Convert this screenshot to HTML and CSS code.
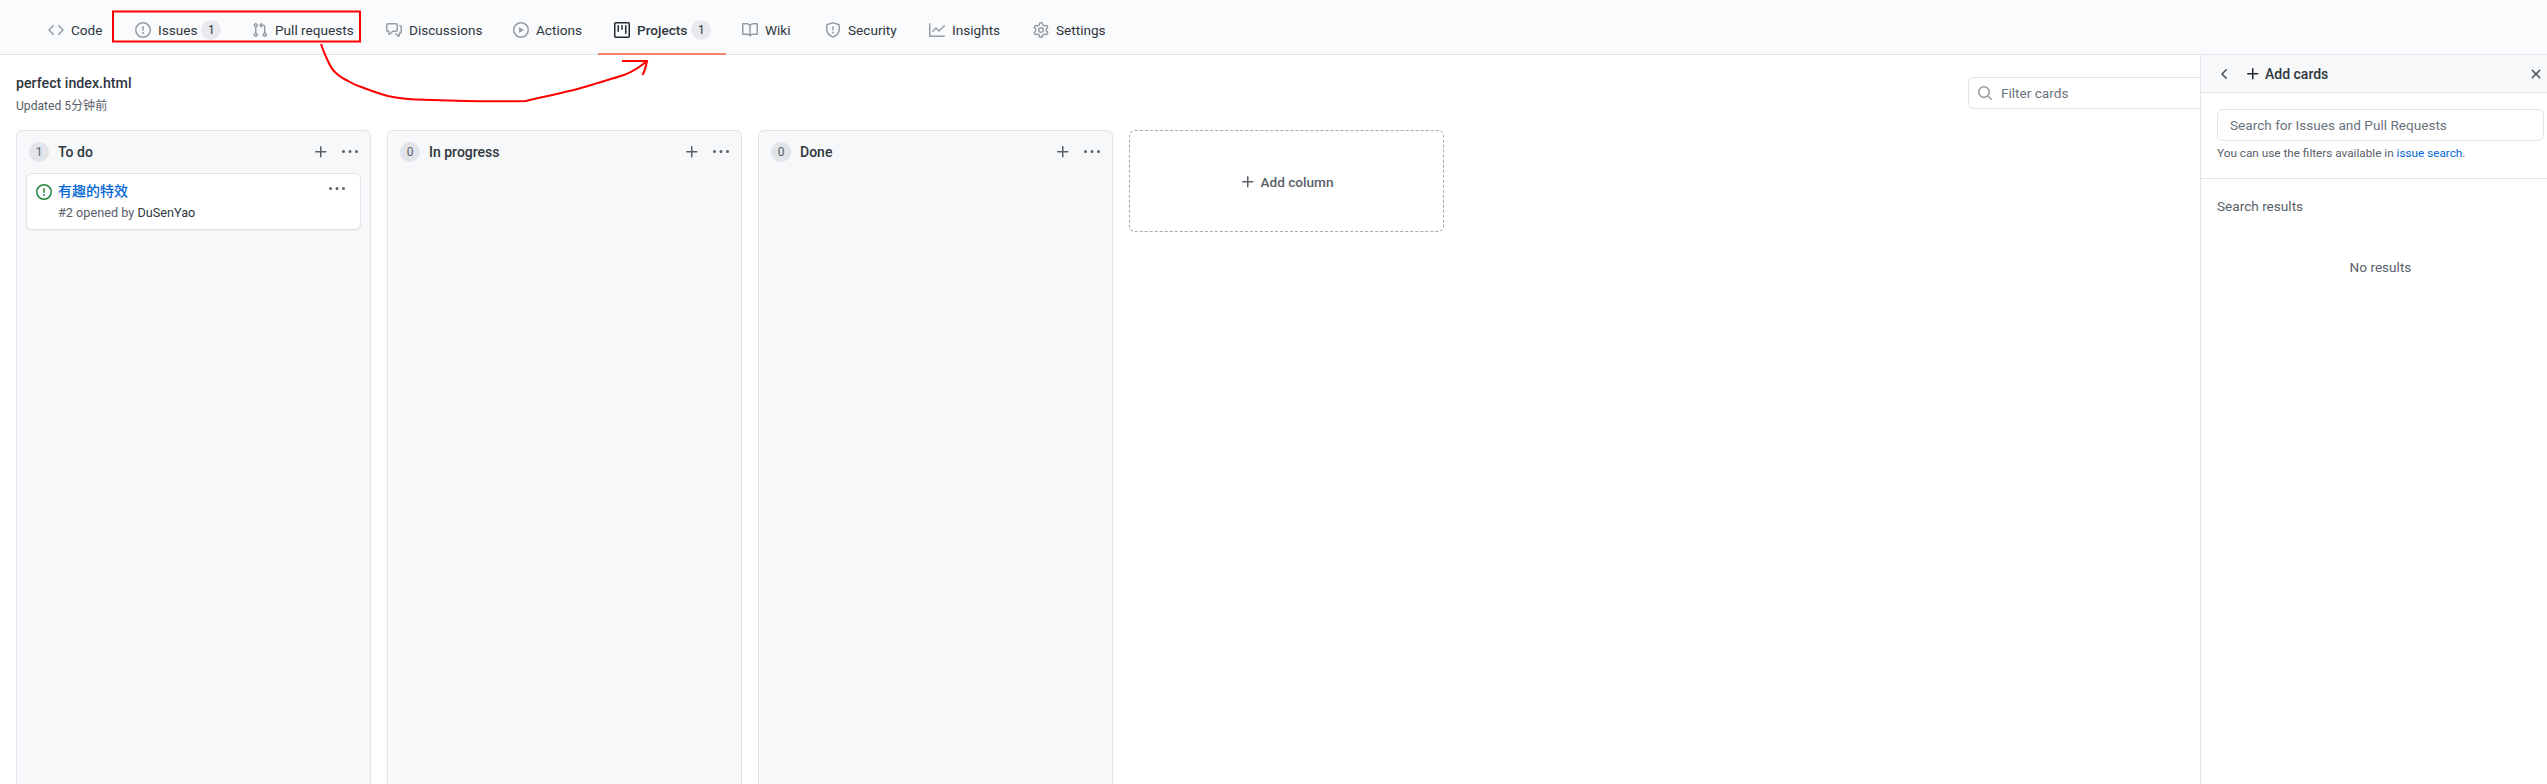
FILE: index.html
```html
<!DOCTYPE html>
<html lang="en">
<head>
<meta charset="utf-8">
<title>perfect index.html</title>
<link rel="stylesheet" href="styles.css">
</head>
<body>
<svg class="sprite" aria-hidden="true">
  <symbol id="i-code" viewBox="0 0 16 16"><path d="M4.72 3.22a.75.75 0 011.06 1.06L2.06 8l3.72 3.72a.75.75 0 11-1.06 1.06L.47 8.53a.75.75 0 010-1.06l4.25-4.25zm6.56 0a.75.75 0 10-1.06 1.06L13.94 8l-3.72 3.72a.75.75 0 101.06 1.06l4.25-4.25a.75.75 0 000-1.06l-4.25-4.25z"/></symbol>
  <symbol id="i-issue" viewBox="0 0 16 16"><path d="M8 1.5a6.5 6.5 0 100 13 6.5 6.5 0 000-13zM0 8a8 8 0 1116 0A8 8 0 010 8zm9 3a1 1 0 11-2 0 1 1 0 012 0zm-.25-6.25a.75.75 0 00-1.5 0v3.5a.75.75 0 001.5 0v-3.5z"/></symbol>
  <symbol id="i-pr" viewBox="0 0 16 16"><path d="M7.177 3.073L9.573.677A.25.25 0 0110 .854v4.792a.25.25 0 01-.427.177L7.177 3.427a.25.25 0 010-.354zM3.75 2.5a.75.75 0 100 1.5.75.75 0 000-1.5zm-2.25.75a2.25 2.25 0 113 2.122v5.256a2.251 2.251 0 11-1.5 0V5.372A2.25 2.25 0 011.5 3.25zM11 2.5h-1V4h1a1 1 0 011 1v5.628a2.251 2.251 0 101.5 0V5A2.5 2.5 0 0011 2.5zm1 10.25a.75.75 0 111.5 0 .75.75 0 01-1.5 0zM3.75 12a.75.75 0 100 1.5.75.75 0 000-1.5z"/></symbol>
  <symbol id="i-disc" viewBox="0 0 16 16"><path d="M1.5 2.75a.25.25 0 01.25-.25h8.5a.25.25 0 01.25.25v5.5a.25.25 0 01-.25.25h-3.5a.75.75 0 00-.53.22L3.5 11.44V9.25a.75.75 0 00-.75-.75h-1a.25.25 0 01-.25-.25v-5.5zM1.75 1A1.75 1.75 0 000 2.75v5.5C0 9.216.784 10 1.75 10H2v1.543a1.457 1.457 0 002.487 1.03L7.061 10h3.189A1.75 1.75 0 0012 8.25v-5.5A1.75 1.75 0 0010.25 1h-8.5zM14.5 4.75a.25.25 0 00-.25-.25h-.5a.75.75 0 110-1.5h.5c.966 0 1.75.784 1.75 1.75v5.5A1.75 1.75 0 0114.25 12H14v1.543a1.457 1.457 0 01-2.487 1.03L9.22 12.28a.75.75 0 111.06-1.06l2.22 2.22v-2.19a.75.75 0 01.75-.75h1a.25.25 0 00.25-.25v-5.5z"/></symbol>
  <symbol id="i-play" viewBox="0 0 16 16"><path d="M1.5 8a6.5 6.5 0 1113 0 6.5 6.5 0 01-13 0zM8 0a8 8 0 100 16A8 8 0 008 0zM6.379 5.227A.25.25 0 006 5.442v5.117a.25.25 0 00.379.214l4.264-2.559a.25.25 0 000-.428L6.379 5.227z"/></symbol>
  <symbol id="i-project" viewBox="0 0 16 16"><path d="M1.75 0A1.75 1.75 0 000 1.75v12.5C0 15.216.784 16 1.75 16h12.5A1.75 1.75 0 0016 14.25V1.75A1.75 1.75 0 0014.25 0H1.75zM1.5 1.75a.25.25 0 01.25-.25h12.5a.25.25 0 01.25.25v12.5a.25.25 0 01-.25.25H1.75a.25.25 0 01-.25-.25V1.75zM11.75 3a.75.75 0 00-.75.75v7.5a.75.75 0 001.5 0v-7.5a.75.75 0 00-.75-.75zm-8.25.75a.75.75 0 011.5 0v5.5a.75.75 0 01-1.5 0v-5.5zM8 3a.75.75 0 00-.75.75v3.5a.75.75 0 001.5 0v-3.5A.75.75 0 008 3z"/></symbol>
  <symbol id="i-book" viewBox="0 0 16 16"><path d="M0 1.75A.75.75 0 01.75 1h4.253c1.227 0 2.317.59 3 1.501A3.744 3.744 0 0111.006 1h4.245a.75.75 0 01.75.75v10.5a.75.75 0 01-.75.75h-4.507a2.25 2.25 0 00-1.591.659l-.622.621a.75.75 0 01-1.06 0l-.622-.621A2.25 2.25 0 005.258 13H.75a.75.75 0 01-.75-.75V1.75zm8.755 3a2.25 2.25 0 012.25-2.25H14.5v9h-3.757c-.71 0-1.4.201-1.992.572l.004-7.322zm-1.504 7.324l.004-5.073-.002-2.253A2.25 2.25 0 005.003 2.5H1.5v9h3.757a3.75 3.75 0 011.994.574z"/></symbol>
  <symbol id="i-shield" viewBox="0 0 16 16"><path d="M7.467.133a1.75 1.75 0 011.066 0l5.25 1.68A1.75 1.75 0 0115 3.48V7c0 1.566-.32 3.182-1.303 4.682-.983 1.498-2.585 2.813-5.032 3.855a1.7 1.7 0 01-1.33 0c-2.447-1.042-4.049-2.357-5.032-3.855C1.32 10.182 1 8.566 1 7V3.48a1.75 1.75 0 011.217-1.667l5.25-1.68zm.61 1.429a.25.25 0 00-.153 0l-5.25 1.68a.25.25 0 00-.174.238V7c0 1.358.275 2.666 1.057 3.86.784 1.194 2.121 2.34 4.366 3.297a.2.2 0 00.154 0c2.245-.956 3.582-2.104 4.366-3.298C13.225 9.666 13.5 8.36 13.5 7V3.48a.25.25 0 00-.174-.237l-5.25-1.68zM9 10.5a1 1 0 11-2 0 1 1 0 012 0zm-.25-5.75a.75.75 0 10-1.5 0v3a.75.75 0 001.5 0v-3z"/></symbol>
  <symbol id="i-graph" viewBox="0 0 16 16"><path d="M1.5 1.75a.75.75 0 00-1.5 0v12.5c0 .414.336.75.75.75h14.5a.75.75 0 000-1.5H1.5V1.75zm14.28 2.53a.75.75 0 00-1.06-1.06L10 7.94 7.53 5.47a.75.75 0 00-1.06 0L3.22 8.72a.75.75 0 001.06 1.06L7 7.06l2.47 2.47a.75.75 0 001.06 0l5.25-5.25z"/></symbol>
  <symbol id="i-gear" viewBox="0 0 16 16"><path d="M7.429 1.525a6.593 6.593 0 011.142 0c.036.003.108.036.137.146l.289 1.105c.147.56.55.967.997 1.189.174.086.341.183.501.29.417.278.97.423 1.53.27l1.102-.303c.11-.03.175.016.195.046.219.31.41.641.573.989.014.031.022.11-.059.19l-.815.806c-.411.406-.562.957-.53 1.456a4.588 4.588 0 010 .582c-.032.499.119 1.05.53 1.456l.815.806c.08.08.073.159.059.19a6.494 6.494 0 01-.573.99c-.02.029-.086.074-.195.045l-1.103-.303c-.559-.153-1.112-.008-1.529.27-.16.107-.327.204-.5.29-.449.222-.851.628-.998 1.189l-.289 1.105c-.029.11-.101.143-.137.146a6.613 6.613 0 01-1.142 0c-.036-.003-.108-.037-.137-.146l-.289-1.105c-.147-.56-.55-.967-.997-1.189a4.502 4.502 0 01-.501-.29c-.417-.278-.97-.423-1.53-.27l-1.102.303c-.11.03-.175-.016-.195-.046a6.492 6.492 0 01-.573-.989c-.014-.031-.022-.11.059-.19l.815-.806c.411-.406.562-.957.53-1.456a4.587 4.587 0 010-.582c.032-.499-.119-1.05-.53-1.456l-.815-.806c-.08-.08-.073-.159-.059-.19a6.44 6.44 0 01.573-.99c.02-.029.086-.075.195-.045l1.103.303c.559.153 1.112.008 1.529-.27.16-.107.327-.204.5-.29.449-.222.851-.628.998-1.189l.289-1.105c.029-.11.101-.143.137-.146zM8 0c-.236 0-.47.01-.701.03-.743.065-1.29.615-1.458 1.261l-.29 1.106c-.017.066-.078.158-.211.224a5.994 5.994 0 00-.668.386c-.123.082-.233.09-.3.071L3.27 2.776c-.644-.177-1.392.02-1.82.63a7.977 7.977 0 00-.704 1.217c-.315.675-.111 1.422.363 1.891l.815.806c.05.048.098.147.088.294a6.084 6.084 0 000 .772c.01.147-.038.246-.088.294l-.815.806c-.474.469-.678 1.216-.363 1.891.2.428.436.835.704 1.218.428.609 1.176.806 1.82.63l1.103-.303c.066-.019.176-.011.299.071.213.143.436.272.668.386.133.066.194.158.212.224l.289 1.106c.169.646.715 1.196 1.458 1.26a8.094 8.094 0 001.402 0c.743-.064 1.29-.614 1.458-1.26l.29-1.106c.017-.066.078-.158.211-.224a5.98 5.98 0 00.668-.386c.123-.082.233-.09.3-.071l1.102.302c.644.177 1.392-.02 1.82-.63.268-.382.505-.789.704-1.217.315-.675.111-1.422-.364-1.891l-.814-.806c-.05-.048-.098-.147-.088-.294a6.1 6.1 0 000-.772c-.01-.147.039-.246.088-.294l.814-.806c.475-.469.679-1.216.364-1.891a7.992 7.992 0 00-.704-1.218c-.428-.609-1.176-.806-1.82-.63l-1.103.303c-.066.019-.176.011-.299-.071a5.991 5.991 0 00-.668-.386c-.133-.066-.194-.158-.212-.224L10.16 1.29C9.99.645 9.444.095 8.701.031A8.094 8.094 0 008 0zm1.5 8a1.5 1.5 0 11-3 0 1.5 1.5 0 013 0zM11 8a3 3 0 11-6 0 3 3 0 016 0z"/></symbol>
  <symbol id="i-plus" viewBox="0 0 16 16"><path d="M7.75 2a.75.75 0 01.75.75V7h4.25a.75.75 0 110 1.5H8.5v4.25a.75.75 0 11-1.5 0V8.5H2.75a.75.75 0 010-1.5H7V2.75A.75.75 0 017.75 2z"/></symbol>
  <symbol id="i-kebab" viewBox="0 0 16 16"><path d="M8 9a1.5 1.5 0 100-3 1.5 1.5 0 000 3zM1.5 9a1.5 1.5 0 100-3 1.5 1.5 0 000 3zm13 0a1.5 1.5 0 100-3 1.5 1.5 0 000 3z"/></symbol>
  <symbol id="i-search" viewBox="0 0 16 16"><path d="M11.5 7a4.499 4.499 0 11-8.998 0A4.499 4.499 0 0111.5 7zm-.82 4.74a6 6 0 111.06-1.06l3.04 3.04a.75.75 0 11-1.06 1.06l-3.04-3.04z"/></symbol>
  <symbol id="i-x" viewBox="0 0 16 16"><path d="M3.72 3.72a.75.75 0 011.06 0L8 6.94l3.22-3.22a.75.75 0 111.06 1.06L9.06 8l3.22 3.22a.75.75 0 11-1.06 1.06L8 9.06l-3.22 3.22a.75.75 0 01-1.06-1.06L6.94 8 3.72 4.78a.75.75 0 010-1.06z"/></symbol>
  <symbol id="i-chevron" viewBox="0 0 16 16"><path d="M9.78 12.78a.75.75 0 01-1.06 0L4.47 8.53a.75.75 0 010-1.06l4.25-4.25a.75.75 0 011.06 1.06L6.06 8l3.72 3.72a.75.75 0 010 1.06z"/></symbol>
</svg>

<nav class="tabs">
  <a class="tab"><svg class="icon"><use href="#i-code"/></svg><span>Code</span></a>
  <a class="tab"><svg class="icon"><use href="#i-issue"/></svg><span>Issues</span><span class="count">1</span></a>
  <a class="tab"><svg class="icon"><use href="#i-pr"/></svg><span>Pull requests</span></a>
  <a class="tab"><svg class="icon"><use href="#i-disc"/></svg><span>Discussions</span></a>
  <a class="tab"><svg class="icon"><use href="#i-play"/></svg><span>Actions</span></a>
  <a class="tab tab-active"><svg class="icon"><use href="#i-project"/></svg><span>Projects</span><span class="count">1</span></a>
  <a class="tab"><svg class="icon"><use href="#i-book"/></svg><span>Wiki</span></a>
  <a class="tab"><svg class="icon"><use href="#i-shield"/></svg><span>Security</span></a>
  <a class="tab"><svg class="icon"><use href="#i-graph"/></svg><span>Insights</span></a>
  <a class="tab"><svg class="icon"><use href="#i-gear"/></svg><span>Settings</span></a>
</nav>

<main class="page">
  <section class="board">
    <header class="toolbar">
      <div class="heading">
        <h1 class="project-name">perfect index.html</h1>
        <p class="updated">Updated 5分钟前</p>
      </div>
      <div class="filter">
        <svg class="icon filter-icon"><use href="#i-search"/></svg>
        <span class="filter-text">Filter cards</span>
      </div>
    </header>
    <div class="columns">
      <article class="column">
        <div class="column-head">
          <span class="count column-count">1</span>
          <h2 class="column-title">To do</h2>
          <svg class="icon action"><use href="#i-plus"/></svg>
          <svg class="icon action"><use href="#i-kebab"/></svg>
        </div>
        <div class="card">
          <svg class="icon card-icon"><use href="#i-issue"/></svg>
          <div class="card-body">
            <a class="card-title">有趣的特效</a>
            <p class="card-meta">#2 opened by <span class="card-author">DuSenYao</span></p>
          </div>
          <svg class="icon action"><use href="#i-kebab"/></svg>
        </div>
      </article>
      <article class="column">
        <div class="column-head">
          <span class="count column-count">0</span>
          <h2 class="column-title">In progress</h2>
          <svg class="icon action"><use href="#i-plus"/></svg>
          <svg class="icon action"><use href="#i-kebab"/></svg>
        </div>
      </article>
      <article class="column">
        <div class="column-head">
          <span class="count column-count">0</span>
          <h2 class="column-title">Done</h2>
          <svg class="icon action"><use href="#i-plus"/></svg>
          <svg class="icon action"><use href="#i-kebab"/></svg>
        </div>
      </article>
      <div class="add-column">
        <svg class="icon action"><use href="#i-plus"/></svg>
        <span>Add column</span>
      </div>
    </div>
  </section>

  <aside class="sidebar">
    <div class="sidebar-head">
      <svg class="icon sidebar-back"><use href="#i-chevron"/></svg>
      <svg class="icon sidebar-plus"><use href="#i-plus"/></svg>
      <span class="sidebar-title">Add cards</span>
      <svg class="icon sidebar-close"><use href="#i-x"/></svg>
    </div>
    <div class="sidebar-search">
      <div class="search-input">Search for Issues and Pull Requests</div>
      <p class="search-help">You can use the filters available in <a class="link">issue search</a>.</p>
    </div>
    <div class="sidebar-results">
      <p class="results-label">Search results</p>
      <p class="results-empty">No results</p>
    </div>
  </aside>
</main>

<svg class="annotation" viewBox="0 0 2547 784" aria-hidden="true">
  <rect class="mark" x="113" y="11.5" width="247" height="30"/>
  <path class="mark" d="M321 44 C323 50 325 55 327 59 C330 66 332 70 336 73 C340 77 344 79 348 81 C353 84 358 86 364 88 C372 91 380 94 388 96 C397 98 406 99 416 99.500 C432 100 448 100.500 465 101 C486 101.500 506 101.500 526 101 C547 96 568 92 588 86 C600 82 612 79 624 75 C632 72 640 67 647 61 M622 61 H647 C646 66 645 71 642.500 75"/>
</svg>
</body>
</html>
```

FILE: styles.css
```css
* {
  box-sizing: border-box;
}

html,
body {
  margin: 0;
  height: 784px;
  overflow: hidden;
}

body {
  position: relative;
  background: #fff;
  color: #2f363d;
  font-family: Roboto, "Noto Sans CJK SC", sans-serif;
  font-size: 13.6px;
}

h1,
h2,
p {
  margin: 0;
  font: inherit;
}

.sprite {
  display: none;
}

.icon {
  display: block;
  flex: none;
  width: 16px;
  height: 16px;
  fill: #6a737d;
  fill-rule: evenodd;
}

/* Repository tabs */
.tabs {
  display: grid;
  grid-template-columns: 87px 117px 134px 127px 101px 128px 83px 104px 104px 105px;
  height: 55px;
  padding-left: 32px;
  background: #fafbfc;
  border-bottom: 1px solid #e1e4e8;
}

.tab {
  display: flex;
  align-items: center;
  gap: 7px;
  height: 55px;
  padding: 7px 0 0 16px;
  border-bottom: 2px solid transparent;
  line-height: 20px;
}

.tab .icon {
  fill: #959da5;
}

.tab-active {
  border-bottom-color: #f9826c;
  font-weight: 500;
}

.tab .count {
  margin-left: -3px;
}

.tab-active .icon {
  fill: #24292e;
}

.count {
  display: flex;
  align-items: center;
  justify-content: center;
  width: 20px;
  height: 20px;
  border-radius: 50%;
  background: #e8eaed;
  font-size: 12px;
  font-weight: 400;
}

/* Page */
.page {
  display: flex;
  height: 729px;
}

.board {
  flex: 1;
  min-width: 0;
  padding-left: 16px;
  overflow: hidden;
}

.toolbar {
  display: flex;
  justify-content: space-between;
  height: 75px;
}

.heading {
  padding-top: 18px;
}

.project-name {
  font-size: 14.2px;
  font-weight: 500;
  line-height: 20px;
}

.updated {
  margin-top: 4px;
  color: #586069;
  font-size: 12.1px;
  line-height: 18px;
}

.filter {
  display: flex;
  align-items: center;
  gap: 8px;
  width: 232px;
  height: 32px;
  margin-top: 22px;
  padding-left: 8px;
  border: 1px solid #e1e4e8;
  border-right: 0;
  border-radius: 6px 0 0 6px;
  color: #6a737d;
}

.filter-icon {
  fill: #959da5;
}

/* Board columns */
.columns {
  display: flex;
  align-items: flex-start;
  gap: 16px;
}

.column {
  flex: none;
  width: 355px;
  height: 700px;
  background: #f6f8fa;
  border: 1px solid #e1e4e8;
  border-radius: 6px;
}

.column-head {
  display: flex;
  align-items: center;
  gap: 13px;
  height: 42px;
  padding: 0 12px;
}

.column-count {
  margin-right: -4px;
  color: #586069;
  background: #e1e4e8;
}

.column-title {
  flex: 1;
  font-size: 14px;
  font-weight: 500;
  line-height: 20px;
}

.action {
  fill: #586069;
}

.card {
  display: flex;
  height: 57px;
  margin: 0 9px;
  padding: 7px 15px 6px 9px;
  background: #fff;
  border: 1px solid #e1e4e8;
  border-radius: 6px;
  box-shadow: 0 1px 1px rgba(27, 31, 35, 0.05);
}

.card-icon {
  margin: 3px 6px 0 0;
  fill: #22863a;
}

.card-body {
  flex: 1;
}

.card-title {
  display: block;
  color: #0366d6;
  font-size: 14px;
  font-weight: 500;
  line-height: 20px;
}

.card-meta {
  margin-top: 3px;
  color: #586069;
  font-size: 12.7px;
  line-height: 18px;
}

.card-author {
  color: #2f363d;
}

.add-column {
  display: flex;
  flex: none;
  align-items: center;
  justify-content: center;
  gap: 5px;
  width: 315px;
  height: 102px;
  padding-top: 2px;
  border: 1px dashed #a3aab1;
  border-radius: 6px;
  color: #586069;
  font-weight: 500;
}

/* Add cards sidebar */
.sidebar {
  flex: none;
  width: 347px;
  background: #fff;
  border-left: 1px solid #e1e4e8;
}

.sidebar-head {
  display: flex;
  align-items: center;
  height: 38px;
  padding: 0 3px 0 16px;
  background: #f6f8fa;
  border-bottom: 1px solid #e1e4e8;
}

.sidebar-back,
.sidebar-close {
  fill: #444d56;
}

.sidebar-plus {
  margin: 0 4px 0 12px;
  fill: #24292e;
}

.sidebar-title {
  flex: 1;
  font-size: 14px;
  font-weight: 500;
}

.sidebar-search {
  height: 86px;
  padding: 16px 3px 0 16px;
  border-bottom: 1px solid #e1e4e8;
}

.search-input {
  height: 32px;
  padding-left: 12px;
  border: 1px solid #e1e4e8;
  border-radius: 6px;
  color: #6a737d;
  line-height: 30px;
}

.search-help {
  margin-top: 3px;
  color: #586069;
  font-size: 11.75px;
  line-height: 18px;
}

.link {
  color: #0366d6;
}

.sidebar-results {
  padding: 17px 3px 0 16px;
  color: #586069;
  line-height: 20px;
}

.results-empty {
  margin-top: 41px;
  text-align: center;
}

/* Hand-drawn red annotation over the page */
.annotation {
  position: absolute;
  top: 0;
  left: 0;
  width: 2547px;
  height: 784px;
  pointer-events: none;
}

.mark {
  fill: none;
  stroke: #fe0000;
  stroke-width: 2;
}
```
